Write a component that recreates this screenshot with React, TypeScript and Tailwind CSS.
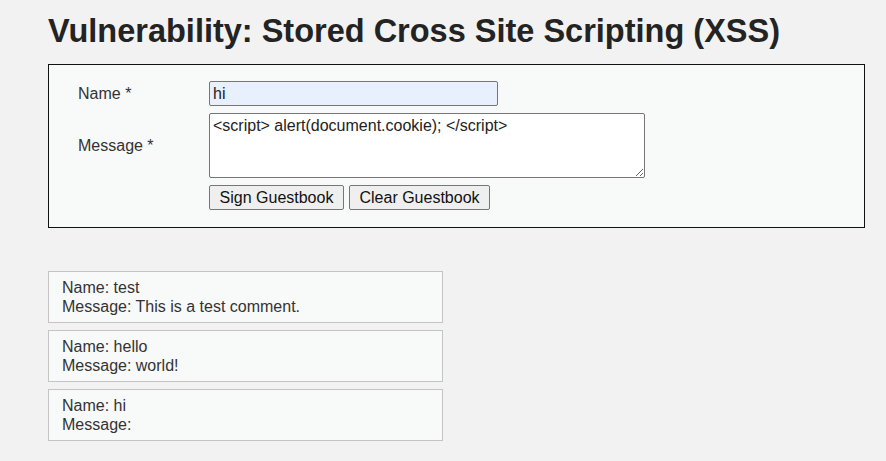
import React from "react";

const entries = [
  { name: "test", message: "This is a test comment." },
  { name: "hello", message: "world!" },
  { name: "hi", message: "" },
];

const App = () => {
  return (
    <div className="min-h-[461px] w-[886px] bg-[#f2f2f2] pl-[48px] pt-[13px] text-[#222] font-['Liberation_Sans',Arial,sans-serif]">
      <h1 className="text-[32.5px] leading-[36px] font-bold text-[#232323]">
        Vulnerability: Stored Cross Site Scripting (XSS)
      </h1>

      <div className="mt-[15px] w-[817px] border border-[#111] bg-[#f8f9f9] pl-[29px] pt-[16px] pb-[17px]">
        <div className="grid grid-cols-[131px_auto] gap-y-[7px] items-center text-[16px] text-[#333]">
          <div>Name *</div>
          <input
            readOnly
            value="hi"
            className="h-[25px] w-[289px] rounded-[2px] border border-[#767676] bg-[#e8f0fe] px-[3px] text-[16px] text-[#222] outline-none"
          />
          <div>Message *</div>
          <textarea
            readOnly
            value="<script> alert(document.cookie); </script>"
            className="block h-[65px] w-[436px] rounded-[2px] border border-[#767676] bg-white px-[3px] py-[2px] text-[16px] leading-[19px] text-[#222] outline-none"
          />
          <div />
          <div className="flex gap-[5px]">
            <button className="h-[25px] w-[135px] rounded-[2px] border border-[#767676] bg-[#efefef] text-[16px] leading-[19px] text-[#111]">
              Sign Guestbook
            </button>
            <button className="h-[25px] w-[141px] rounded-[2px] border border-[#767676] bg-[#efefef] text-[16px] leading-[19px] text-[#111]">
              Clear Guestbook
            </button>
          </div>
        </div>
      </div>

      <div className="mt-[43px] flex w-[395px] flex-col gap-[7px]">
        {entries.map((entry) => (
          <div
            key={entry.name}
            className="border border-[#c4c4c4] bg-[#f8f9f9] px-[13px] py-[6px] text-[16px] leading-[19px] text-[#333]"
          >
            <div>Name: {entry.name}</div>
            <div>Message: {entry.message}</div>
          </div>
        ))}
      </div>
    </div>
  );
};

export default App;
